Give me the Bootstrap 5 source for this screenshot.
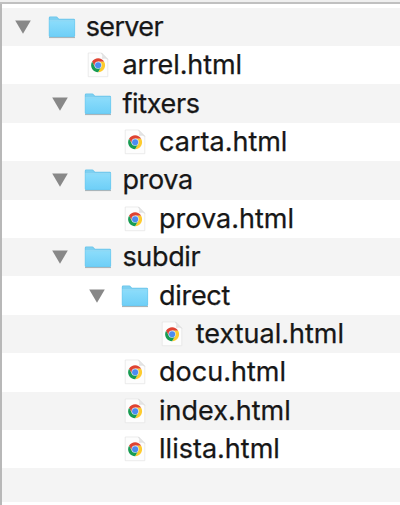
<!DOCTYPE html>
<html lang="ca">
<head>
<meta charset="utf-8">
<title>server</title>
<link href="https://cdn.jsdelivr.net/npm/bootstrap@5.3.0/dist/css/bootstrap.min.css" rel="stylesheet">
<style>
body{font-family:Inter,"Liberation Sans",sans-serif;color:#171717;background:#fff}
.finder{height:505px;border-left:2px solid #b8b8b8}
.topbar{height:4px;margin-left:-2px;background:#efefef;border-bottom:2px solid #c0c0c0}
.tree{padding-top:3.7px}
.tree-row{height:38.4px;padding-left:calc(13.3px + var(--level)*36.7px)}
.tree-row:nth-child(odd){background:#f4f4f4}
.tree-row:last-child{height:34px}
.l0{--level:0}.l1{--level:1}.l2{--level:2}.l3{--level:3}
.arrow{width:16px;height:14px;flex:none}
.icon{width:28px;height:26px;margin-left:16.3px;margin-right:10.1px;flex:none}
.no-arrow{width:16px;flex:none}
.label{font-size:27px;line-height:38px;letter-spacing:-.33px;-webkit-text-stroke:.25px #171717}
.no-arrow ~ .label{letter-spacing:0}
.l0 .label{letter-spacing:-.65px}
.l1 .no-arrow ~ .label{letter-spacing:-.1px}
</style>
<script src="https://cdn.jsdelivr.net/npm/bootstrap@5.3.0/dist/js/bootstrap.bundle.min.js"></script>
</head>
<body class="overflow-hidden">
<svg width="0" height="0" class="position-absolute" aria-hidden="true">
<defs>
<linearGradient id="blue" x1="0" y1="0" x2="0" y2="1"><stop offset="0" stop-color="#8bdcfb"/><stop offset="1" stop-color="#6ecff7"/></linearGradient>
<symbol id="triangle" viewBox="0 0 16 14"><path d="M.2.6h15.6L8 13.7z" fill="#888"/></symbol>
<symbol id="folder" viewBox="0 0 28 26">
<path d="M1 23.5h26" stroke="#a9b5ba" stroke-width="1.2"/>
<path d="M.8 4q0-1.4 1.4-1.4h6q1 0 1.6.8l.7.8q.5.6 1.4.6h13.8q1.4 0 1.4 1.4v15.6q0 1.3-1.3 1.3H2.1q-1.3 0-1.3-1.3z" fill="#6ac5eb"/>
<path d="M1.4 7.3h25.1v14.3q0 1-1 1H2.4q-1 0-1-1z" fill="url(#blue)"/>
<path d="M1.6 4.2q0-.9.9-.9h5.5q.8 0 1.3.7l.8 1q.5.6 1.3.6h13.7q1.1 0 1.3.9H1.6z" fill="#7ed0f1"/>
<path d="M1.3 6.8h25.3" stroke="#a1e3fb" stroke-width=".9"/>
</symbol>
<symbol id="page" viewBox="0 0 28 26">
<path d="M4.2 1h13.5l6.1 6.2v17.5H4.2z" fill="#fdfdfd" stroke="#e4e4e4" stroke-width=".7"/>
<path d="M17.5 1q1.8 2.4.8 5.5 3-1 5.5.8z" fill="#e5e5e5" stroke="#d4d4d4" stroke-width=".4"/>
<g transform="translate(14.1 13.2)">
<circle r="7" fill="#fff"/>
<path d="M-6.06-3.5A7 7 0 0 1 6.06-3.5H0L-3.03 1.75z" fill="#df4332"/>
<path d="M6.06-3.5A7 7 0 0 1 0 7L3.03 1.75 0-3.5z" fill="#fdcb2e"/>
<path d="M0 7A7 7 0 0 1-6.06-3.5L-3.03 1.75H3.03z" fill="#179c52"/>
<circle r="3.6" fill="#dfe9f9"/><circle r="3" fill="#4c8bf0"/>
</g>
</symbol>
</defs></svg>
<main class="finder">
<div class="topbar"></div>
<div class="tree">
<div class="tree-row l0 d-flex align-items-center"><svg class="arrow"><use href="#triangle"/></svg><svg class="icon"><use href="#folder"/></svg><span class="label">server</span></div>
<div class="tree-row l1 d-flex align-items-center"><span class="no-arrow"></span><svg class="icon"><use href="#page"/></svg><span class="label">arrel.html</span></div>
<div class="tree-row l1 d-flex align-items-center"><svg class="arrow"><use href="#triangle"/></svg><svg class="icon"><use href="#folder"/></svg><span class="label">fitxers</span></div>
<div class="tree-row l2 d-flex align-items-center"><span class="no-arrow"></span><svg class="icon"><use href="#page"/></svg><span class="label">carta.html</span></div>
<div class="tree-row l1 d-flex align-items-center"><svg class="arrow"><use href="#triangle"/></svg><svg class="icon"><use href="#folder"/></svg><span class="label">prova</span></div>
<div class="tree-row l2 d-flex align-items-center"><span class="no-arrow"></span><svg class="icon"><use href="#page"/></svg><span class="label">prova.html</span></div>
<div class="tree-row l1 d-flex align-items-center"><svg class="arrow"><use href="#triangle"/></svg><svg class="icon"><use href="#folder"/></svg><span class="label">subdir</span></div>
<div class="tree-row l2 d-flex align-items-center"><svg class="arrow"><use href="#triangle"/></svg><svg class="icon"><use href="#folder"/></svg><span class="label">direct</span></div>
<div class="tree-row l3 d-flex align-items-center"><span class="no-arrow"></span><svg class="icon"><use href="#page"/></svg><span class="label">textual.html</span></div>
<div class="tree-row l2 d-flex align-items-center"><span class="no-arrow"></span><svg class="icon"><use href="#page"/></svg><span class="label">docu.html</span></div>
<div class="tree-row l2 d-flex align-items-center"><span class="no-arrow"></span><svg class="icon"><use href="#page"/></svg><span class="label">index.html</span></div>
<div class="tree-row l2 d-flex align-items-center"><span class="no-arrow"></span><svg class="icon"><use href="#page"/></svg><span class="label">llista.html</span></div>
<div class="tree-row l0"></div>
</div>
</main>
</body>
</html>
